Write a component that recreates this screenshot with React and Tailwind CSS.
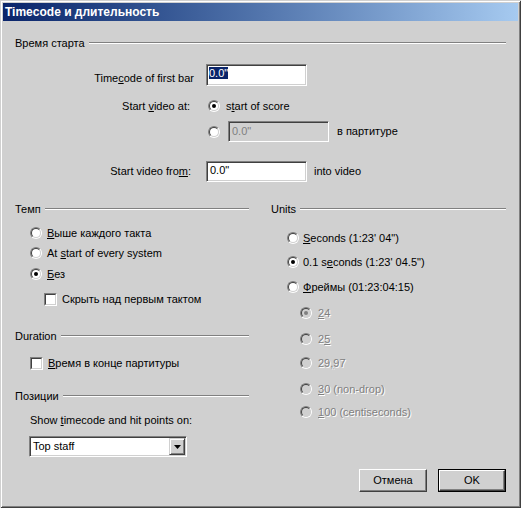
import React from "react";

function Radio({ checked, disabled }) {
  return (
    <span className="relative inline-block w-[12px] h-[12px] shrink-0 rounded-full border border-t-[#808080] border-l-[#808080] border-r-white border-b-white">
      <span
        className={
          disabled
            ? "absolute inset-0 flex items-center justify-center rounded-full border border-t-[#404040] border-l-[#404040] border-r-[#d0d0d0] border-b-[#d0d0d0] bg-[#d0d0d0]"
            : "absolute inset-0 flex items-center justify-center rounded-full border border-t-[#404040] border-l-[#404040] border-r-[#d0d0d0] border-b-[#d0d0d0] bg-white"
        }
      >
        {checked && (
          <span
            className={
              disabled
                ? "w-[4px] h-[4px] rounded-full bg-[#808080]"
                : "w-[4px] h-[4px] rounded-full bg-black"
            }
          />
        )}
      </span>
    </span>
  );
}

function Check() {
  return (
    <span className="inline-block w-[13px] h-[13px] shrink-0 border border-t-[#808080] border-l-[#808080] border-r-white border-b-white">
      <span className="block w-full h-full border border-t-[#404040] border-l-[#404040] border-r-[#d0d0d0] border-b-[#d0d0d0] bg-white" />
    </span>
  );
}

function Header({ children }) {
  return (
    <div className="flex h-[14px] items-center">
      <span className="leading-[13px]">{children}</span>
      <div className="ml-[4px] flex-1 border-t border-b border-t-[#808080] border-b-white" />
    </div>
  );
}

const sunken =
  "border border-t-[#808080] border-l-[#808080] border-r-white border-b-white shadow-[inset_1px_1px_0_#404040,inset_-1px_-1px_0_#d0d0d0]";

const dis = "text-[#808080] [text-shadow:1px_1px_0_#ffffff]";

function SubRadio({ checked, children, mt }) {
  return (
    <div className={"flex h-[20px] items-center pl-[29px] " + mt}>
      <Radio checked={checked} disabled />
      <span className={"ml-[6px] leading-[13px] " + dis}>{children}</span>
    </div>
  );
}

export default function App() {
  return (
    <div className="w-[521px] h-[508px] bg-[#d0d0d0] p-[3px] text-[11px] leading-[13px] text-black font-['Liberation_Sans',Arial,sans-serif] shadow-[inset_1px_1px_0_#d0d0d0,inset_-1px_-1px_0_#404040,inset_2px_2px_0_#ffffff,inset_-2px_-2px_0_#808080]">
      <div className="flex h-[18px] items-center bg-linear-to-r from-[#0a246a] to-[#a6caf0] pl-[2px] text-[12px] font-bold text-white">
        Timecode и длительность
      </div>

      <div className="px-[12px]">
        <div className="mt-[15px]">
          <Header>Время старта</Header>
        </div>

        <div className="mt-[14px] flex h-[22px] items-end">
          <div className="w-[179px] pb-[1px] text-right">
            Time<u>c</u>ode of first bar
          </div>
          <div className={"ml-[12px] h-[22px] w-[101px] bg-white pl-[2px] pt-[2px] " + sunken}>
            <span className="bg-[#0a246a] text-white">0.0"</span>
          </div>
        </div>

        <div className="mt-[10px] flex h-[20px] items-center">
          <div className="w-[175px] text-right">
            Start <u>v</u>ideo at:
          </div>
          <div className="ml-[18px] flex items-center">
            <Radio checked />
            <span className="ml-[6px]">
              s<u>t</u>art of score
            </span>
          </div>
        </div>

        <div className="mt-[5px] flex h-[21px] items-center">
          <div className="ml-[193px] flex items-center">
            <Radio />
          </div>
          <div className={"ml-[8px] h-[21px] w-[101px] bg-[#d0d0d0] pl-[3px] pt-[3px] text-[#808080] " + sunken}>
            0.0"
          </div>
          <span className="ml-[8px]">в партитуре</span>
        </div>

        <div className="mt-[19px] flex h-[21px] items-center">
          <div className="w-[176px] text-right">
            Start video fro<u>m</u>:
          </div>
          <div className={"ml-[15px] h-[21px] w-[101px] bg-white pl-[3px] pt-[2px] " + sunken}>
            0.0"
          </div>
          <span className="ml-[7px]">into video</span>
        </div>

        <div className="mt-[20px] grid grid-cols-[234px_235px] gap-x-[22px]">
          <div className="flex flex-col">
            <Header>Темп</Header>
            <div className="mt-[7px] flex h-[20px] items-center pl-[15px]">
              <Radio />
              <span className="ml-[5px]">
                <u>В</u>ыше каждого такта
              </span>
            </div>
            <div className="flex h-[20px] items-center pl-[15px]">
              <Radio />
              <span className="ml-[5px]">
                At <u>s</u>tart of every system
              </span>
            </div>
            <div className="mt-[1px] flex h-[20px] items-center pl-[15px]">
              <Radio checked />
              <span className="ml-[5px]">
                <u>Б</u>ез
              </span>
            </div>
            <div className="mt-[5px] flex h-[20px] items-center pl-[29px]">
              <Check />
              <span className="ml-[5px]">Скрыть над первым тактом</span>
            </div>

            <div className="mt-[20px]">
              <Header>Duration</Header>
            </div>
            <div className="mt-[10px] flex h-[20px] items-center pl-[15px]">
              <Check />
              <span className="ml-[5px]">
                <u>В</u>ремя в конце партитуры
              </span>
            </div>

            <div className="mt-[16px]">
              <Header>Позиции</Header>
            </div>
            <div className="mt-[11px] h-[14px] pl-[15px]">
              Show <u>t</u>imecode and hit points on:
            </div>
            <div className={"relative ml-[14px] mt-[8px] h-[21px] w-[158px] bg-white " + sunken}>
              <div className="pl-[3px] pt-[3px]">Top staff</div>
              <div className="absolute right-[1px] top-[1px] bottom-[1px] flex w-[16px] items-center justify-center border border-t-[#d0d0d0] border-l-[#d0d0d0] border-r-[#404040] border-b-[#404040] bg-[#d0d0d0] shadow-[inset_1px_1px_0_#ffffff,inset_-1px_-1px_0_#808080]">
                <svg width="7" height="4" viewBox="0 0 7 4">
                  <path d="M0 0h7L3.5 4z" fill="#000" />
                </svg>
              </div>
            </div>
          </div>

          <div className="flex flex-col">
            <Header>Units</Header>
            <div className="mt-[12px] flex h-[20px] items-center pl-[16px]">
              <Radio />
              <span className="ml-[4px]">
                <u>S</u>econds (1:23' 04")
              </span>
            </div>
            <div className="mt-[4px] flex h-[20px] items-center pl-[16px]">
              <Radio checked />
              <span className="ml-[4px]">
                0.1 s<u>e</u>conds (1:23' 04.5")
              </span>
            </div>
            <div className="mt-[5px] flex h-[20px] items-center pl-[16px]">
              <Radio />
              <span className="ml-[4px]">
                <u>Ф</u>реймы (01:23:04:15)
              </span>
            </div>
            <SubRadio checked mt="mt-[6px]">
              <u>2</u>4
            </SubRadio>
            <SubRadio mt="mt-[6px]">
              2<u>5</u>
            </SubRadio>
            <SubRadio mt="mt-[4px]">
              29<u>,</u>97
            </SubRadio>
            <SubRadio mt="mt-[6px]">
              <u>3</u>0 (non-drop)
            </SubRadio>
            <SubRadio mt="mt-[3px]">
              <u>1</u>00 (centiseconds)
            </SubRadio>
          </div>
        </div>

        <div className="mt-[12px] flex justify-end gap-[11px]">
          <button className="flex h-[23px] w-[68px] items-center justify-center border border-t-white border-l-white border-r-[#404040] border-b-[#404040] bg-[#d0d0d0] shadow-[inset_-1px_-1px_0_#808080,inset_1px_1px_0_#d0d0d0]">
            Отмена
          </button>
          <button className="h-[23px] w-[68px] border border-black bg-[#d0d0d0]">
            <span className="flex h-full w-full items-center justify-center border border-t-white border-l-white border-r-[#404040] border-b-[#404040] shadow-[inset_-1px_-1px_0_#808080]">
              OK
            </span>
          </button>
        </div>
      </div>
    </div>
  );
}
